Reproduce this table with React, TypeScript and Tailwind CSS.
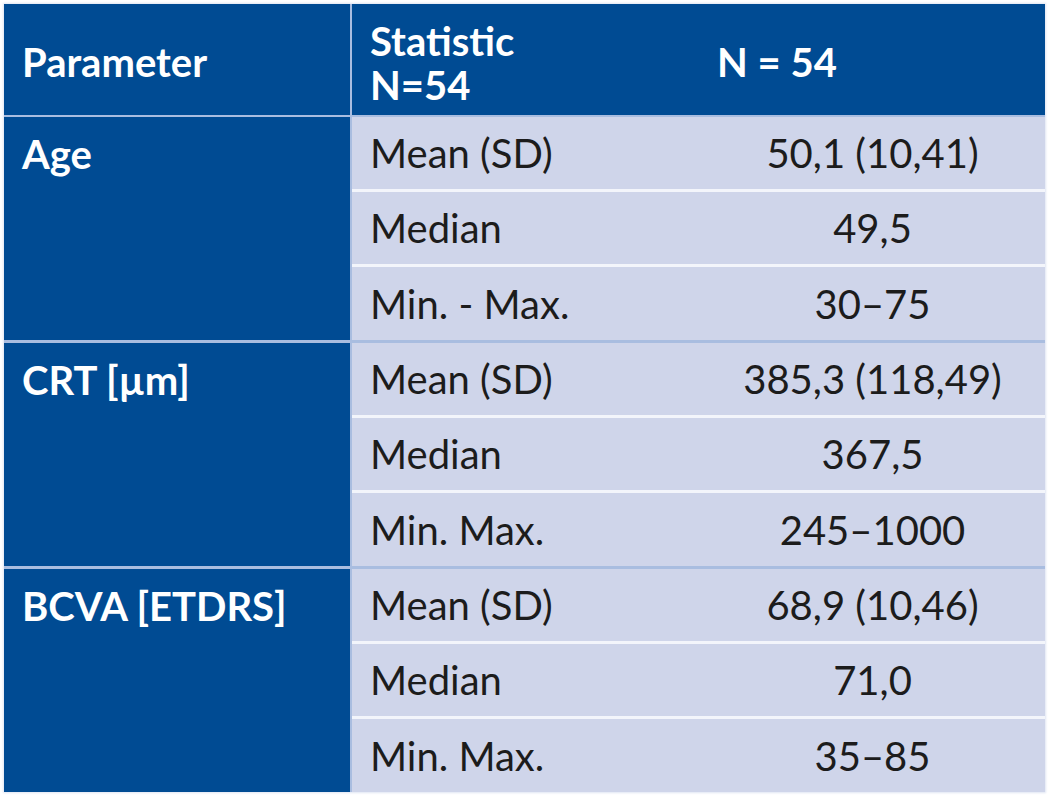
import React from "react";

const groups = [
  {
    label: "Age",
    rows: [
      ["Mean (SD)", "50,1 (10,41)"],
      ["Median", "49,5"],
      ["Min. - Max.", "30–75"],
    ],
  },
  {
    label: "CRT [µm]",
    rows: [
      ["Mean (SD)", "385,3 (118,49)"],
      ["Median", "367,5"],
      ["Min. Max.", "245–1000"],
    ],
  },
  {
    label: "BCVA [ETDRS]",
    rows: [
      ["Mean (SD)", "68,9 (10,46)"],
      ["Median", "71,0"],
      ["Min. Max.", "35–85"],
    ],
  },
];

export default function App() {
  return (
    <div className="w-[1053px] h-[800px] bg-white pt-[4px] pl-[4px] font-['Lato',sans-serif]">
      <div className="w-[1041px] flex flex-col shadow-[0_0_2px_1px_#dfe5f3]">
        {/* Header */}
        <div className="flex h-[113px] border-b-2 border-[#a9bde0] bg-[#004b93] text-white font-bold text-[40px] leading-[44px]">
          <div className="w-[348px] border-r-2 border-[#a9bde0] flex items-center pl-[18px] pt-[4px]">
            Parameter
          </div>
          <div className="w-[348px] flex flex-col justify-center pl-[18px] pt-[6px]">
            <span>Statistic</span>
            <span>N=54</span>
          </div>
          <div className="flex-1 flex items-center pl-[17px] pt-[4px]">N = 54</div>
        </div>
        {groups.map((g, gi) => (
          <div
            key={g.label}
            className={
              "flex " + (gi < groups.length - 1 ? "border-b-[3px] border-[#a9bde0]" : "")
            }
          >
            <div className="w-[348px] bg-[#004b93] border-r-2 border-[#a9bde0] text-white font-bold text-[40px] pl-[18px]">
              <div className="h-[74px] flex items-center">{g.label}</div>
            </div>
            <div className="flex-1 flex flex-col">
              {g.rows.map((r, ri) => (
                <div
                  key={ri}
                  className={
                    "flex items-center bg-[#cfd5ea] text-[#1c1c1c] text-[40px] " +
                    (ri < 2 ? "h-[75px] border-b-[3px] border-[#f3f5fb]" : "h-[73px]")
                  }
                >
                  <div className="w-[348px] pl-[18px]">{r[0]}</div>
                  <div className="flex-1 text-center">{r[1]}</div>
                </div>
              ))}
            </div>
          </div>
        ))}
      </div>
    </div>
  );
}
